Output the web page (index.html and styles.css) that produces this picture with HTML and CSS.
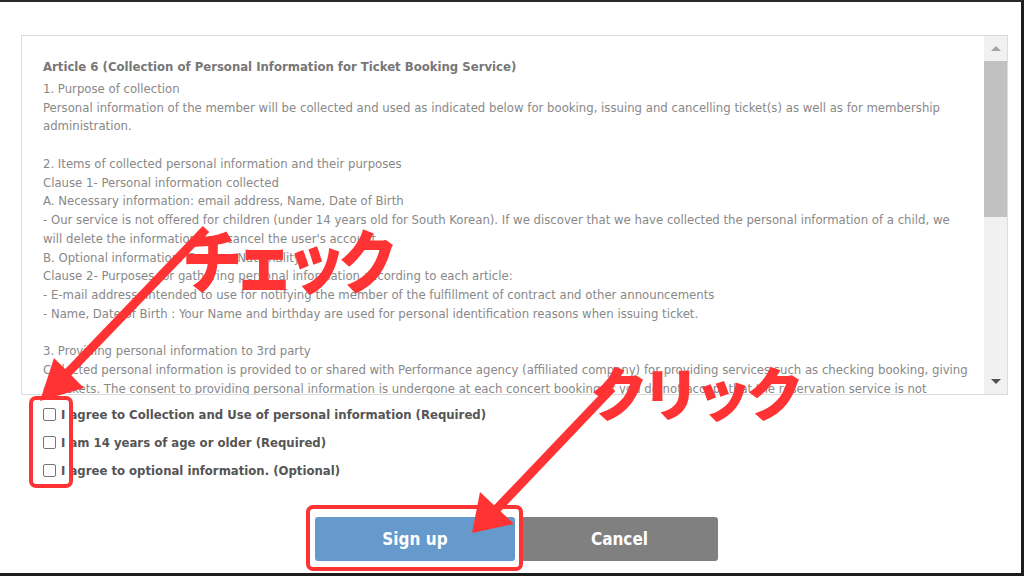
FILE: index.html
```html
<!DOCTYPE html>
<html>

<head>
    <title>Sign up - Terms</title>
    <meta charset="UTF-8">
    <meta name="viewport" content="width=device-width, initial-scale=1.0">
    <link rel="stylesheet" href="styles.css">
</head>

<body>
    <div class="page">
        <div class="terms">
            <div class="terms-text">
                <h3>Article 6 (Collection of Personal Information for Ticket Booking Service)</h3>
                <p>1. Purpose of collection<br>
                    Personal information of the member will be collected and used as indicated below for booking, issuing and cancelling ticket(s) as well as for membership administration.</p>
                <p>2. Items of collected personal information and their purposes<br>
                    Clause 1- Personal information collected<br>
                    A. Necessary information: email address, Name, Date of Birth<br>
                    - Our service is not offered for children (under 14 years old for South Korean). If we discover that we have collected the personal information of a child, we will delete the information and cancel the user's account.<br>
                    B. Optional information: Gender, Nationality<br>
                    Clause 2- Purposes for gathering personal information according to each article:<br>
                    - E-mail address: Intended to use for notifying the member of the fulfillment of contract and other announcements<br>
                    - Name, Date of Birth : Your Name and birthday are used for personal identification reasons when issuing ticket.</p>
                <p>3. Providing personal information to 3rd party<br>
                    Collected personal information is provided to or shared with Performance agency (affiliated company) for providing services such as checking booking, giving of tickets. The consent to providing personal information is undergone at each concert booking. If you do not accept that the reservation service is not available.</p>
            </div>
            <div class="scrollbar">
                <div class="sb-btn"><span class="arrow-up"></span></div>
                <div class="sb-track"><div class="sb-thumb"></div></div>
                <div class="sb-btn"><span class="arrow-down"></span></div>
            </div>
        </div>

        <ul class="agree-list">
            <li><label><input type="checkbox">I agree to Collection and Use of personal information (Required)</label></li>
            <li><label><input type="checkbox">I am 14 years of age or older (Required)</label></li>
            <li><label><input type="checkbox">I agree to optional information. (Optional)</label></li>
        </ul>

        <div class="buttons">
            <button type="submit" class="btn signup">Sign up</button>
            <button type="button" class="btn cancel">Cancel</button>
        </div>
    </div>

    <!-- red notes drawn over the screenshot -->
    <div class="note note-check">チェック</div>
    <div class="note note-click">クリック</div>
    <svg class="marks" width="1024" height="576" viewBox="0 0 1024 576">
        <rect x="31" y="398" width="40" height="88" rx="5" />
        <rect x="308" y="507" width="213" height="62" rx="5" />
        <line x1="206" y1="229" x2="58" y2="383" />
        <polygon points="40,401 54,358 84,388" />
        <line x1="612" y1="388" x2="492" y2="514" />
        <polygon points="472,533 480,492 514,524" />
    </svg>
</body>

</html>
```

FILE: styles.css
```css
body {
    margin: 0;
    background-color: #fff;
    font-family: "DejaVu Sans Condensed", "DejaVu Sans", sans-serif;
    font-stretch: condensed;
}

.page {
    height: 576px;
    box-sizing: border-box;
    border-top: 2px solid #2a2a2a;
    border-right: 3px solid #1c1c1c;
    border-bottom: 3px solid #1c1c1c;
    padding: 33px 0 0 21px;
}

.terms {
    display: flex;
    width: 987px;
    height: 360px;
    box-sizing: border-box;
    border: 1px solid #dcdcdc;
}

.terms-text {
    flex: 1;
    overflow: hidden;
    padding: 22px 12px 0 21px;
    color: #888;
    font-size: 13px;
    line-height: 18.75px;
}

.terms-text h3 {
    margin: 0 0 3px;
    font-size: 13px;
    color: #777;
}

.terms-text p {
    margin: 0 0 18.75px;
}

.scrollbar {
    width: 23px;
    display: flex;
    flex-direction: column;
    background-color: #f1f1f1;
}

.sb-btn {
    height: 25px;
    display: flex;
    align-items: center;
    justify-content: center;
}

.sb-track {
    flex: 1;
}

.sb-thumb {
    height: 156px;
    background-color: #c1c1c1;
}

.arrow-up {
    width: 0;
    height: 0;
    border-left: 5px solid transparent;
    border-right: 5px solid transparent;
    border-bottom: 5px solid #a3a3a3;
}

.arrow-down {
    width: 0;
    height: 0;
    border-left: 5px solid transparent;
    border-right: 5px solid transparent;
    border-top: 5px solid #505050;
}

.agree-list {
    list-style: none;
    margin: 5px 0 0;
    padding: 0 0 0 22px;
}

.agree-list li {
    height: 28px;
    display: flex;
    align-items: center;
}

.agree-list label {
    display: flex;
    align-items: center;
    font-size: 13px;
    font-weight: bold;
    color: #555;
}

.agree-list input[type=checkbox] {
    appearance: none;
    -webkit-appearance: none;
    width: 13px;
    height: 13px;
    margin: 0 5px 0 0;
    border: 1px solid #767676;
    border-radius: 2px;
    background-color: #fff;
}

.buttons {
    display: flex;
    justify-content: center;
    gap: 6px;
    width: 987px;
    margin-top: 33px;
    padding-left: 4px;
    box-sizing: border-box;
}

.btn {
    width: 200px;
    height: 44px;
    border: none;
    border-radius: 3px;
    color: #fff;
    font-family: inherit;
    font-stretch: condensed;
    font-size: 17px;
    font-weight: bold;
}

.signup {
    background-color: #6699cc;
}

.cancel {
    width: 197px;
    background-color: #808080;
}

.note {
    position: absolute;
    font-family: "Noto Sans CJK JP", sans-serif;
    font-weight: 900;
    line-height: 1;
    color: #f33;
    transform-origin: top left;
}

.note-check {
    left: 182px;
    top: 224px;
    font-size: 60px;
    letter-spacing: -8px;
    transform: scaleY(1.15);
}

.note-click {
    left: 590px;
    top: 362px;
    font-size: 58px;
    letter-spacing: -6px;
}

.marks {
    position: absolute;
    top: 0;
    left: 0;
    pointer-events: none;
}

.marks rect {
    fill: none;
    stroke: #f33;
    stroke-width: 4;
}

.marks line {
    stroke: #f33;
    stroke-width: 9;
}

.marks polygon {
    fill: #f33;
}
```
